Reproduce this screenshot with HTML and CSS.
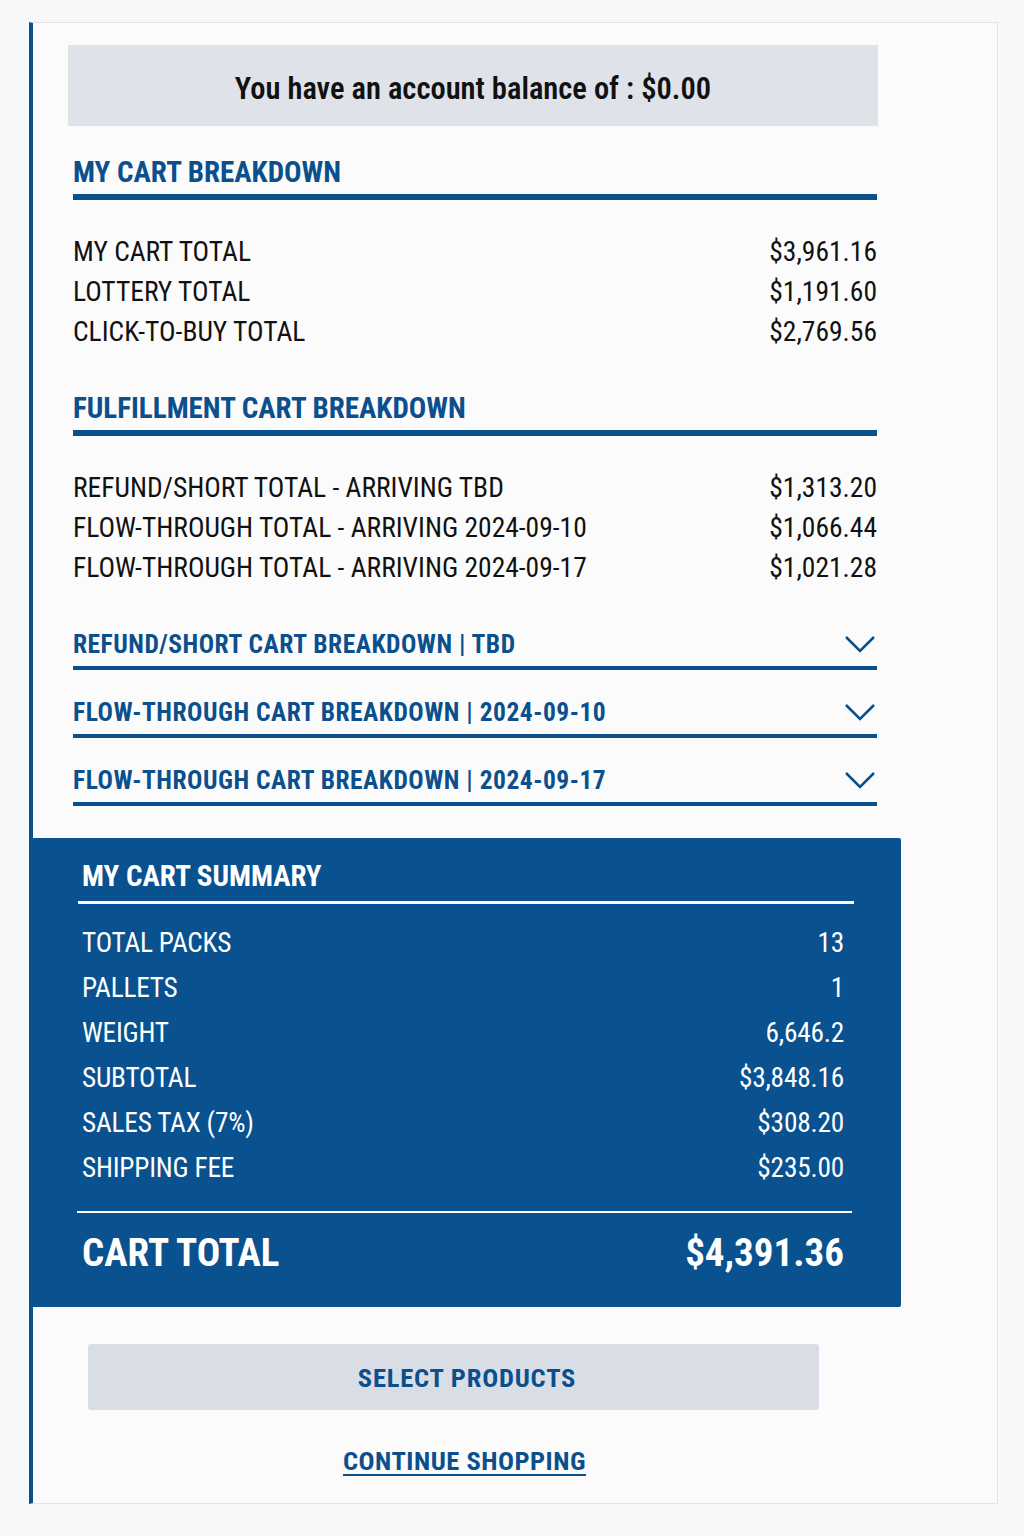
FILE: index.html
```html
<!doctype html>
<html lang="en">
  <head>
    <meta charset="UTF-8" />
    <meta name="viewport" content="width=device-width, initial-scale=1.0" />
    <title>Cart Summary</title>
    <link rel="stylesheet" href="styles.css">
  </head>
  <body>
    <div class="cart-panel">
      <div class="balance">You have an account balance of : $0.00</div>

      <section class="breakdown">
        <h2 class="section-title">MY CART BREAKDOWN</h2>
        <div class="line-items">
          <div class="line"><span>MY CART TOTAL</span><span>$3,961.16</span></div>
          <div class="line"><span>LOTTERY TOTAL</span><span>$1,191.60</span></div>
          <div class="line"><span>CLICK-TO-BUY TOTAL</span><span>$2,769.56</span></div>
        </div>
      </section>

      <section class="breakdown">
        <h2 class="section-title">FULFILLMENT CART BREAKDOWN</h2>
        <div class="line-items">
          <div class="line"><span>REFUND/SHORT TOTAL - ARRIVING TBD</span><span>$1,313.20</span></div>
          <div class="line"><span>FLOW-THROUGH TOTAL - ARRIVING 2024-09-10</span><span>$1,066.44</span></div>
          <div class="line"><span>FLOW-THROUGH TOTAL - ARRIVING 2024-09-17</span><span>$1,021.28</span></div>
        </div>
      </section>

      <div class="accordions">
        <div class="accordion">
          <span>REFUND/SHORT CART BREAKDOWN | TBD</span>
          <svg class="chevron" viewBox="0 0 32 18"><path d="M2 2 L16 16 L30 2" /></svg>
        </div>
        <div class="accordion">
          <span>FLOW-THROUGH CART BREAKDOWN | 2024-09-10</span>
          <svg class="chevron" viewBox="0 0 32 18"><path d="M2 2 L16 16 L30 2" /></svg>
        </div>
        <div class="accordion">
          <span>FLOW-THROUGH CART BREAKDOWN | 2024-09-17</span>
          <svg class="chevron" viewBox="0 0 32 18"><path d="M2 2 L16 16 L30 2" /></svg>
        </div>
      </div>

      <section class="summary">
        <h2 class="summary-title">MY CART SUMMARY</h2>
        <div class="summary-items">
          <div class="line"><span>TOTAL PACKS</span><span>13</span></div>
          <div class="line"><span>PALLETS</span><span>1</span></div>
          <div class="line"><span>WEIGHT</span><span>6,646.2</span></div>
          <div class="line"><span>SUBTOTAL</span><span>$3,848.16</span></div>
          <div class="line"><span>SALES TAX (7%)</span><span>$308.20</span></div>
          <div class="line"><span>SHIPPING FEE</span><span>$235.00</span></div>
        </div>
        <div class="grand-total"><span>CART TOTAL</span><span>$4,391.36</span></div>
      </section>

      <div class="actions">
        <button class="btn-select">SELECT PRODUCTS</button>
        <a class="continue" href="#">CONTINUE SHOPPING</a>
      </div>
    </div>
  </body>
</html>
```

FILE: styles.css
```css
* {
  margin: 0;
  padding: 0;
  box-sizing: border-box;
}

body {
  font-family: Roboto, "Liberation Sans", sans-serif;
  font-stretch: 85%;
  background: #f7f8fa;
  color: #111;
  padding: 22px 26px 0 29px;
}

.cart-panel {
  background: #fbfbfc;
  border: 1px solid #e2e4e8;
  border-left: 4px solid #0b4f8e;
  padding: 22px 0 24px 35px;
  min-height: 1482px;
}

.balance {
  width: 810px;
  height: 81px;
  padding-top: 6px;
  background: #dfe2e8;
  display: flex;
  align-items: center;
  justify-content: center;
  font-size: 30.5px;
  font-weight: 600;
  color: #111;
}

.breakdown {
  width: 804px;
  margin-left: 5px;
}

/* blue section heading with thick underline */
.section-title {
  font-size: 29px;
  font-weight: 700;
  color: #0b4f8c;
  padding-top: 30px;
  padding-bottom: 6px;
  border-bottom: 6px solid #0b4f8c;
  line-height: 32px;
}

.line-items {
  padding: 32px 0 10px;
}

.line-items .line {
  display: flex;
  justify-content: space-between;
  font-size: 27.5px;
  line-height: 40px;
  color: #111;
}

.accordions {
  width: 804px;
  margin-left: 5px;
  margin-top: 4px;
}

.accordion {
  display: flex;
  justify-content: space-between;
  align-items: center;
  padding: 27px 0 7px;
  line-height: 30px;
  border-bottom: 4px solid #0b4f8c;
  font-size: 25.5px;
  letter-spacing: 0.5px;
  font-weight: 700;
  color: #0b4f8c;
}

.chevron {
  width: 32px;
  height: 18px;
  fill: none;
  stroke: #0b4f8c;
  stroke-width: 2.6;
  margin-right: 1px;
}

/* dark blue totals box, bleeds over the panel's left border */
.summary {
  margin: 32px 0 0 -39px;
  width: 872px;
  background: #0a5190;
  color: #fff;
  padding: 20px 47px 32px 49px;
  border-radius: 0 2px 2px 0;
}

.summary-title {
  font-size: 29px;
  font-weight: 700;
  line-height: 36px;
  padding: 0 0 7px 4px;
  border-bottom: 3px solid #fff;
}

.summary-items {
  padding: 17px 10px 20px 4px;
}

.summary-items .line {
  display: flex;
  justify-content: space-between;
  font-size: 27.3px;
  letter-spacing: -0.2px;
  line-height: 45px;
}

.grand-total {
  border-top: 2px solid #fff;
  margin-left: -1px;
  margin-right: 2px;
  padding: 18px 8px 0 5px;
  display: flex;
  justify-content: space-between;
  font-size: 39px;
  font-weight: 700;
  line-height: 44px;
}

.actions {
  display: flex;
  flex-direction: column;
  align-items: flex-start;
}

.btn-select {
  margin-top: 37px;
  margin-left: 20px;
  width: 731px;
  height: 66px;
  padding-left: 27px;
  background: #d9dee6;
  border: none;
  border-radius: 3px;
  font-family: inherit;
  font-stretch: 85%;
  font-size: 26.5px;
  letter-spacing: 0.8px;
  font-weight: 700;
  color: #0b4f8c;
}

.continue {
  margin-top: 35px;
  margin-left: 275px;
  font-size: 26.5px;
  letter-spacing: 0.5px;
  font-weight: 700;
  color: #0b4f8c;
  text-decoration: underline;
  text-underline-offset: 4px;
  text-decoration-thickness: 2px;
}
```
